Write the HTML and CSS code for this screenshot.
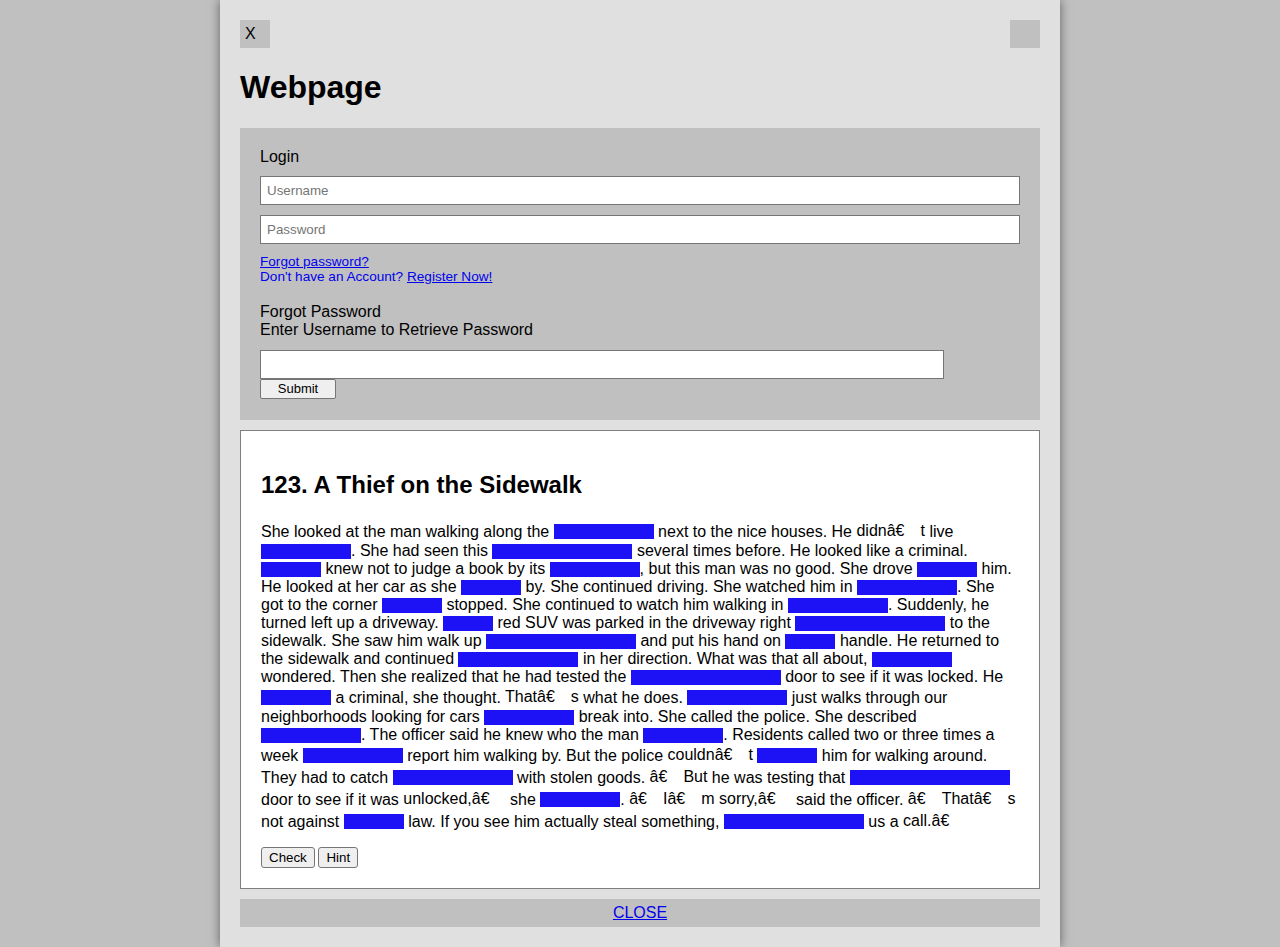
FILE: index.html
```html
<!DOCTYPE html>
<html>
<head>
<meta charset="utf-8">
<title>Webpage</title>
<link rel="stylesheet" href="styles.css">
</head>
<body>
<div class="page">
  <div class="topbar">
    <div class="xbtn">X</div>
    <div class="sq"></div>
  </div>
  <h1 class="title">Webpage</h1>
  <div class="login">
    <div class="label">Login</div>
    <input class="field" type="text" placeholder="Username">
    <input class="field" type="password" placeholder="Password">
    <div class="links"><a href="#">Forgot password?</a><br>Don't have an Account? <a href="#">Register Now!</a></div>
    <div class="forgot">Forgot Password<br>Enter Username to Retrieve Password</div>
    <input class="field short" type="text">
    <button class="submit">Submit</button>
  </div>
  <div class="article">
    <h2 class="heading">123. A Thief on the Sidewalk</h2>
    <p class="story">She looked at the man walking along the <span class="blank b100"></span> next to the nice houses. He <span class="w">didnâ€<span class="gap"></span>t</span> live <span class="blank b90"></span>. She had seen this <span class="blank b140"></span> several times before. He looked like a criminal. <span class="blank b60"></span> knew not to judge a book by its <span class="blank b90"></span>, but this man was no good. She drove <span class="blank b60"></span> him. He looked at her car as she <span class="blank b60"></span> by. She continued driving. She watched him in <span class="blank b100"></span>. She got to the corner <span class="blank b60"></span> stopped. She continued to watch him walking in <span class="blank b100"></span>. Suddenly, he turned left up a driveway. <span class="blank b50"></span> red SUV was parked in the driveway right <span class="blank b150"></span> to the sidewalk. She saw him walk up <span class="blank b150"></span> and put his hand on <span class="blank b50"></span> handle. He returned to the sidewalk and continued <span class="blank b120"></span> in her direction. What was that all about, <span class="blank b80"></span> wondered. Then she realized that he had tested the <span class="blank b150"></span> door to see if it was locked. He <span class="blank b70"></span> a criminal, she thought. <span class="w">Thatâ€<span class="gap"></span>s</span> what he does. <span class="blank b100"></span> just walks through our neighborhoods looking for cars <span class="blank b90"></span> break into. She called the police. She described <span class="blank b100"></span>. The officer said he knew who the man <span class="blank b80"></span>. Residents called two or three times a week <span class="blank b100"></span> report him walking by. But the police <span class="w">couldnâ€<span class="gap"></span>t</span> <span class="blank b60"></span> him for walking around. They had to catch <span class="blank b120"></span> with stolen goods. <span class="w">â€<span class="gap"></span>But</span> he was testing that <span class="blank b160"></span> door to see if it was <span class="w">unlocked,â€<span class="gap"></span></span> she <span class="blank b80"></span>. <span class="w">â€<span class="gap"></span>Iâ€<span class="gap"></span>m</span> <span class="w">sorry,â€<span class="gap"></span></span> said the officer. <span class="w">â€<span class="gap"></span>Thatâ€<span class="gap"></span>s</span> not against <span class="blank b60"></span> law. If you see him actually steal something, <span class="blank b140"></span> us a <span class="w">call.â€<span class="gap"></span></span></p>
    <div class="actions"><button class="btn">Check</button> <button class="btn">Hint</button></div>
  </div>
  <div class="closebar"><a href="#">CLOSE</a></div>
</div>
</body>
</html>
```

FILE: styles.css
```css
html, body {
  margin: 0;
  padding: 0;
}
body {
  background: #c0c0c0;
  font-family: "Liberation Sans", Arial, sans-serif;
  font-size: 16px;
  color: #000;
}
.page {
  box-sizing: border-box;
  width: 840px;
  min-height: 100vh;
  margin: 0 auto;
  padding: 20px 20px 20px;
  background: #e0e0e0;
  box-shadow: 0 0 10px rgba(0, 0, 0, 0.5);
}
.topbar {
  display: flex;
  justify-content: space-between;
  align-items: flex-start;
}
.xbtn {
  box-sizing: border-box;
  width: 30px;
  height: 28px;
  line-height: 27px;
  padding-left: 5px;
  background: #c0c0c0;
  font-size: 16px;
}
.sq {
  width: 30px;
  height: 28px;
  background: #c0c0c0;
}
.title {
  font-size: 32px;
  font-weight: bold;
  margin: 21px 0 22px;
}
.login {
  background: #c0c0c0;
  padding: 20px 20px 21px;
}
.label {
  line-height: 18px;
}
.field {
  display: block;
  box-sizing: border-box;
  width: 100%;
  height: 29px;
  margin: 10px 0 0;
  padding: 0 6px;
  border: 1px solid #767676;
  border-radius: 0;
  background: #fff;
  font-family: "Liberation Sans", Arial, sans-serif;
  font-size: 13.333px;
  color: #000;
}
.field::placeholder {
  color: #757575;
}
.field.short {
  width: 90%;
}
.links {
  margin-top: 10px;
  font-size: 13.6px;
  line-height: 15px;
  color: #0000ee;
}
.links a {
  color: #0000ee;
}
.forgot {
  margin-top: 19px;
  line-height: 18.4px;
}
.submit {
  display: block;
  box-sizing: border-box;
  width: 76px;
  height: 20px;
  padding: 0;
  border: 1px solid #767676;
  border-radius: 2px;
  background: #efefef;
  font-family: "Liberation Sans", Arial, sans-serif;
  font-size: 13px;
  color: #000;
}
.article {
  margin-top: 10px;
  padding: 20px;
  border: 1px solid #808080;
  background: #fff;
}
.heading {
  font-size: 24px;
  font-weight: bold;
  margin: 20px 0 21px;
}
.story {
  margin: 21px 0 15px;
  line-height: normal;
}
.blank {
  display: inline-block;
  height: 15px;
  vertical-align: -3px;
  background: #1d12f5;
}
.b50 { width: 50px; }
.b60 { width: 60px; }
.b70 { width: 70px; }
.b80 { width: 80px; }
.b90 { width: 90px; }
.b100 { width: 100px; }
.b120 { width: 120px; }
.b140 { width: 140px; }
.b150 { width: 150px; }
.b160 { width: 160px; }
.w {
  white-space: nowrap;
}
.gap {
  display: inline-block;
  width: 16px;
  height: 22px;
  vertical-align: -5.5px;
}
.actions {
  font-size: 13px;
}
.btn {
  box-sizing: border-box;
  height: 21px;
  padding: 0 7px;
  border: 1px solid #767676;
  border-radius: 3px;
  background: #efefef;
  font-family: "Liberation Sans", Arial, sans-serif;
  font-size: 13.333px;
  color: #000;
}
.closebar {
  margin-top: 10px;
  height: 28px;
  line-height: 28px;
  background: #c0c0c0;
  text-align: center;
}
.closebar a {
  color: #0000ee;
}
```
